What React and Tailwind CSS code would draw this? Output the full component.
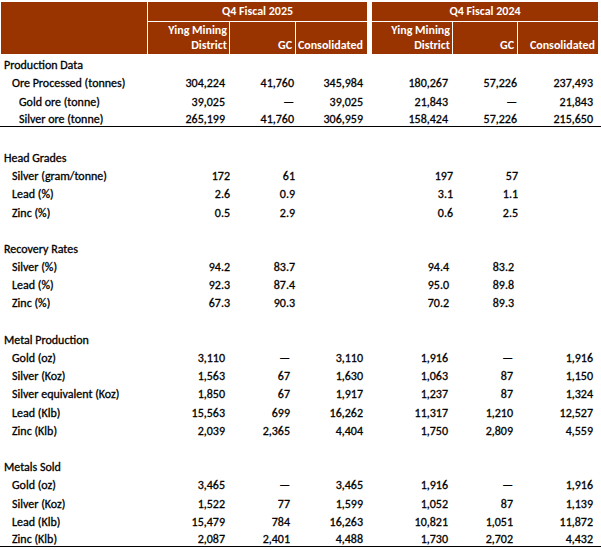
const cols = "grid grid-cols-[148px_82px_66px_71px_5px_81px_65px_80px]";

// right padding for each value column, per section
const pads = {
  prod: ["pr-[5px]", "pr-[2px]", "pr-[4px]", "pr-[5px]", "pr-[1px]", "pr-[5px]"],
  metal: ["pr-[5px]", "pr-[6px]", "pr-[4px]", "pr-[5px]", "pr-[5px]", "pr-[5px]"],
  grade: ["pr-0", "pr-[1px]", "pr-0", "pr-0", "pr-0", "pr-0"],
  recov: ["pr-0", "pr-[1px]", "pr-0", "pr-[4px]", "pr-[4px]", "pr-0"],
};

const sections = [
  {
    title: "Production Data",
    pad: "prod",
    line: true,
    rows: [
      ["Ore Processed (tonnes)", 1, "304,224", "41,760", "345,984", "180,267", "57,226", "237,493"],
      ["Gold ore (tonne)", 2, "39,025", "—", "39,025", "21,843", "—", "21,843"],
      ["Silver ore (tonne)", 2, "265,199", "41,760", "306,959", "158,424", "57,226", "215,650"],
    ],
  },
  {
    title: "Head Grades",
    pad: "grade",
    rows: [
      ["Silver (gram/tonne)", 1, "172", "61", "", "197", "57", ""],
      ["Lead (%)", 1, "2.6", "0.9", "", "3.1", "1.1", ""],
      ["Zinc (%)", 1, "0.5", "2.9", "", "0.6", "2.5", ""],
    ],
  },
  {
    title: "Recovery Rates",
    pad: "recov",
    rows: [
      ["Silver (%)", 1, "94.2", "83.7", "", "94.4", "83.2", ""],
      ["Lead (%)", 1, "92.3", "87.4", "", "95.0", "89.8", ""],
      ["Zinc (%)", 1, "67.3", "90.3", "", "70.2", "89.3", ""],
    ],
  },
  {
    title: "Metal Production",
    pad: "metal",
    rows: [
      ["Gold (oz)", 1, "3,110", "—", "3,110", "1,916", "—", "1,916"],
      ["Silver (Koz)", 1, "1,563", "67", "1,630", "1,063", "87", "1,150"],
      ["Silver equivalent (Koz)", 1, "1,850", "67", "1,917", "1,237", "87", "1,324"],
      ["Lead (Klb)", 1, "15,563", "699", "16,262", "11,317", "1,210", "12,527"],
      ["Zinc (Klb)", 1, "2,039", "2,365", "4,404", "1,750", "2,809", "4,559"],
    ],
  },
  {
    title: "Metals Sold",
    pad: "metal",
    line: true,
    rows: [
      ["Gold (oz)", 1, "3,465", "—", "3,465", "1,916", "—", "1,916"],
      ["Silver (Koz)", 1, "1,522", "77", "1,599", "1,052", "87", "1,139"],
      ["Lead (Klb)", 1, "15,479", "784", "16,263", "10,821", "1,051", "11,872"],
      ["Zinc (Klb)", 1, "2,087", "2,401", "4,488", "1,730", "2,702", "4,432"],
    ],
  },
];

function Header() {
  const cell = "bg-[#993300] text-white font-bold flex items-end justify-end";
  return (
    <div className={`${cols} grid-rows-[20px_32px] mt-[2px] leading-[15px]`}>
      <div className="row-span-2 ml-px bg-[#993300] border-r border-white" />
      <div className="col-span-3 bg-[#993300] border-b border-white text-white font-bold flex items-center justify-center">
        Q4 Fiscal 2025
      </div>
      <div className="row-span-2" />
      <div className="col-span-3 bg-[#993300] border-b border-white text-white font-bold flex items-center justify-center">
        Q4 Fiscal 2024
      </div>
      <div className={`${cell} border-r border-white pr-[2px] pb-[1px] text-right`}>
        Ying Mining
        <br />
        District
      </div>
      <div className={`${cell} border-r border-white pr-[3px] pb-[1px]`}>GC</div>
      <div className={`${cell} pr-[4px] pb-[1px]`}>Consolidated</div>
      <div className={`${cell} border-r border-white pr-[2px] pb-[1px] text-right`}>
        Ying Mining
        <br />
        District
      </div>
      <div className={`${cell} border-r border-white pr-[3px] pb-[1px]`}>GC</div>
      <div className={`${cell} pr-[3px] pb-[1px]`}>Consolidated</div>
    </div>
  );
}

function Row({ label, indent, values, pad, line }) {
  const ind = indent === 0 ? "pl-[4px]" : indent === 1 ? "pl-[12px]" : "pl-[19px]";
  const vals = [values[0], values[1], values[2], null, values[3], values[4], values[5]];
  let k = 0;
  return (
    <div
      className={`${cols} h-[18.2px] items-end leading-[13px] ${line ? "border-b border-black" : ""}`}
    >
      <div className={`${ind} whitespace-nowrap`}>{label}</div>
      {vals.map((v, i) => {
        if (v === null) return <div key={i} />;
        const p = pads[pad][k++];
        return (
          <div key={i} className={`text-right ${p}`}>
            {v}
          </div>
        );
      })}
    </div>
  );
}

export default function App() {
  return (
    <div
      className="w-[601px] h-[550px] bg-white text-[12px] text-black overflow-hidden"
      style={{ fontFamily: "Carlito, Calibri, Lato, 'Liberation Sans', sans-serif" }}
    >
      <Header />
      <div className="[-webkit-text-stroke:0.3px_#000]">
        {sections.map((s, si) => (
          <div key={s.title}>
            {si > 0 && <div className={si === 1 ? "h-[20px]" : "h-[18.2px]"} />}
            <Row label={s.title} indent={0} values={["", "", "", "", "", ""]} pad={s.pad} />
            {s.rows.map((r, ri) => (
              <Row
                key={ri}
                label={r[0]}
                indent={r[1]}
                values={r.slice(2)}
                pad={s.pad}
                line={s.line && ri === s.rows.length - 1}
              />
            ))}
          </div>
        ))}
      </div>
    </div>
  );
}
